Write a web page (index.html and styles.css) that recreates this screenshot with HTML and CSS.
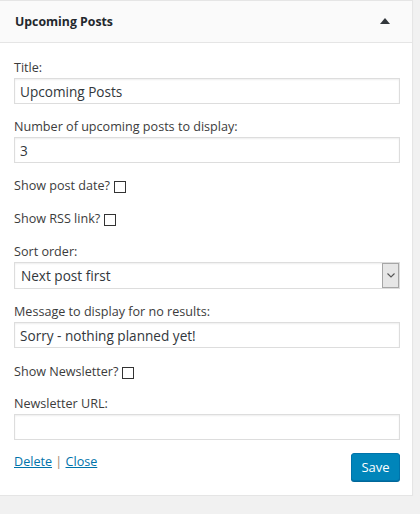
FILE: index.html
```html
<!DOCTYPE html>
<html>
<head>
<meta charset="utf-8">
<link rel="stylesheet" href="styles.css">
</head>
<body>
<div class="widget">
  <div class="widget-top">
    <h3 class="widget-title">Upcoming Posts</h3>
    <span class="toggle"><svg width="10" height="6" viewBox="0 0 10 6"><path d="M0 6 L5 0 L10 6 Z" fill="#32373c"/></svg></span>
  </div>
  <form class="widget-inside">
    <div class="field">
      <label class="lbl">Title:</label>
      <input class="txt" type="text" value="Upcoming Posts">
    </div>
    <div class="field">
      <label class="lbl">Number of upcoming posts to display:</label>
      <input class="txt" type="text" value="3">
    </div>
    <div class="check-row">
      <span>Show post date?</span><span class="cb"></span>
    </div>
    <div class="check-row">
      <span>Show RSS link?</span><span class="cb"></span>
    </div>
    <div class="field">
      <label class="lbl">Sort order:</label>
      <div class="select">
        <span class="select-value">Next post first</span>
        <span class="select-btn"><svg width="8" height="5" viewBox="0 0 8 5"><path d="M0.5 0.5 L4 4 L7.5 0.5" fill="none" stroke="#555" stroke-width="1.1"/></svg></span>
      </div>
    </div>
    <div class="field">
      <label class="lbl">Message to display for no results:</label>
      <input class="txt" type="text" value="Sorry - nothing planned yet!">
    </div>
    <div class="check-row nl">
      <span>Show Newsletter?</span><span class="cb"></span>
    </div>
    <div class="field">
      <label class="lbl">Newsletter URL:</label>
      <input class="txt" type="text" value="">
    </div>
    <div class="actions">
      <div class="links"><a href="#">Delete</a> <span class="sep">|</span> <a href="#">Close</a></div>
      <button type="button" class="save">Save</button>
    </div>
  </form>
</div>
</body>
</html>
```

FILE: styles.css
```css
html, body {
  margin: 0;
  padding: 0;
  background: #f1f1f1;
  font-family: "Open Sans", "Liberation Sans", sans-serif;
  color: #444;
}

.widget {
  width: 412px;
  background: #fff;
  border-top: 1px solid #e5e5e5;
  border-right: 1px solid #e5e5e5;
  border-bottom: 1px solid #e5e5e5;
  box-shadow: 0 1px 1px rgba(0,0,0,0.04);
}

.widget-top {
  height: 41px;
  background: #fafafa;
  border-bottom: 1px solid #e5e5e5;
  display: flex;
  align-items: center;
  justify-content: space-between;
  padding: 0 22px 0 15px;
}

.widget-title {
  margin: 0;
  font-size: 12.3px;
  font-weight: 700;
  color: #23282d;
  line-height: 20px;
  padding-top: 1px;
}

.toggle {
  display: flex;
  margin-top: -1px;
}

.widget-inside {
  display: flex;
  flex-direction: column;
  gap: 13px;
  padding: 15px 12px 14px 14px;
  margin: 0;
}

.field {
  display: flex;
  flex-direction: column;
}

.lbl {
  font-size: 12.6px;
  line-height: 20px;
  color: #3c3c3c;
}

.txt {
  box-sizing: border-box;
  width: 386px;
  height: 26px;
  margin: 0;
  border: 1px solid #ddd;
  box-shadow: inset 0 1px 2px rgba(0,0,0,0.07);
  padding: 0 5px;
  font-family: "Open Sans", "Liberation Sans", sans-serif;
  font-size: 13.6px;
  color: #32373c;
  background: #fff;
  outline: none;
}

.check-row {
  display: flex;
  align-items: center;
  gap: 4px;
  font-size: 12.6px;
  line-height: 20px;
  color: #3c3c3c;
}

.check-row.nl {
  margin-top: 1px;
  margin-bottom: -1px;
}

.cb {
  box-sizing: border-box;
  width: 12px;
  height: 12px;
  border: 1px solid #333;
  background: #fff;
  margin-top: 1px;
}

.select {
  box-sizing: border-box;
  width: 386px;
  height: 27px;
  border: 1px solid #ddd;
  box-shadow: inset 0 1px 2px rgba(0,0,0,0.07);
  display: flex;
  align-items: center;
  justify-content: space-between;
  padding-left: 6px;
  padding-right: 0;
  font-size: 13.6px;
  color: #32373c;
}

.select-btn {
  box-sizing: border-box;
  width: 17px;
  height: 25px;
  background: #e6e6e6;
  border: 1px solid #a6a6a6;
  display: flex;
  align-items: center;
  justify-content: center;
}

.actions {
  display: flex;
  justify-content: space-between;
  align-items: flex-start;
  margin-top: -1px;
}

.links {
  font-size: 12.6px;
  line-height: 20px;
}

.links a {
  color: #0073aa;
  text-decoration: underline;
}

.sep {
  color: #a08466;
}

.save {
  box-sizing: border-box;
  width: 49px;
  height: 28px;
  margin-top: 1px;
  margin-right: 0;
  background: #0085ba;
  border: 1px solid #0073aa;
  border-radius: 3px;
  box-shadow: 0 1px 0 #006799;
  color: #fff;
  font-family: "Open Sans", "Liberation Sans", sans-serif;
  font-size: 13px;
  padding: 0;
  line-height: 26px;
}
```
